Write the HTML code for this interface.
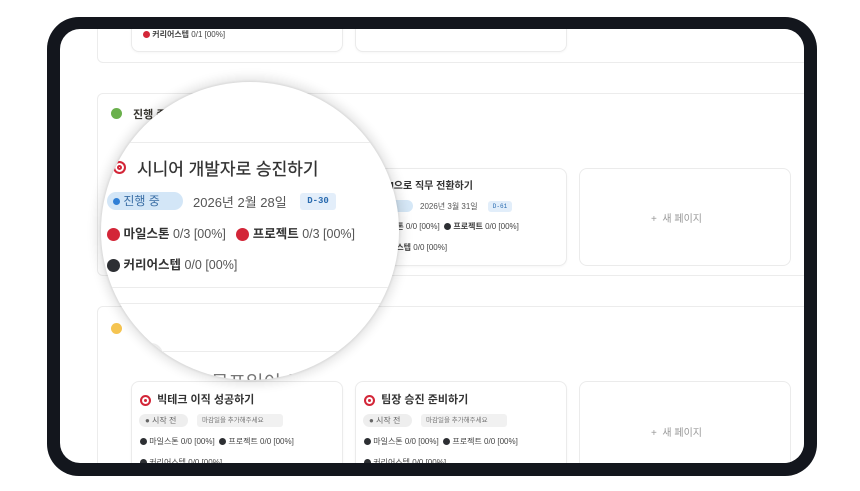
<!DOCTYPE html>
<html><head><meta charset="utf-8"><style>
*{margin:0;padding:0;box-sizing:border-box}
body{width:860px;height:491px;background:#fff;position:relative;overflow:hidden;font-family:"Liberation Sans","Noto Sans CJK KR",sans-serif;color:#37352f}
.abs{position:absolute}
.frame{left:47px;top:17px;width:770px;height:459px;background:#13161d;border-radius:32px}
.screen{left:60px;top:29px;width:744px;height:434px;background:#fff;border-radius:20px;overflow:hidden}
.sec{position:absolute;border:1px solid #ececec;border-radius:6px;background:#fff}
.card{position:absolute;border:1px solid #ebebeb;border-radius:8px;background:#fff;box-shadow:0 1px 2px rgba(0,0,0,.04)}
.t{position:absolute;white-space:nowrap}
.dot{display:inline-block;border-radius:50%;vertical-align:middle}
.pill{position:absolute;border-radius:8px;white-space:nowrap}
.mag{left:101px;top:82px;width:298px;height:298px;border-radius:50%;overflow:hidden;background:#fff;box-shadow:0 0 10px 5px rgba(0,0,0,.10),0 0 2px 1px rgba(0,0,0,.08)}
.tg{display:inline-block;border-radius:50%;background:#fff;border:2px solid #d32638;box-shadow:inset 0 0 0 2px #fff,inset 0 0 0 4px #d32638;vertical-align:middle}
</style></head><body>
<div class="abs frame"></div>
<div class="abs screen">
 <div class="sec" style="left:37px;top:-20px;width:760px;height:54px"></div>
 <div class="card" style="left:71px;top:-20px;width:212px;height:43px"></div>
 <div class="card" style="left:295px;top:-20px;width:212px;height:43px"></div>
 <div class="t" style="left:83px;top:0px;font-size:8px;color:#444"><span class="dot" style="width:7px;height:7px;background:#d32638"></span> <b>커리어스텝</b> 0/1 [00%]</div>

 <div class="sec" style="left:37px;top:64px;width:760px;height:183px"></div>
 <div class="dot abs" style="left:51px;top:79px;width:11px;height:11px;background:#6ab04c"></div>
 <div class="t" style="left:73px;top:77px;font-size:11px;font-weight:bold">진행 중</div>
 <div class="card" style="left:71px;top:139px;width:212px;height:98px"></div>
 <div class="card" style="left:295px;top:139px;width:212px;height:98px"></div>
 <div class="t" style="left:306px;top:148px;font-size:10px;font-weight:bold;color:#333"><span class="tg" style="width:10px;height:10px"></span> PM으로 직무 전환하기</div>
 <div class="pill" style="left:305px;top:171px;width:48px;height:12px;background:#d6e8f7"></div>
 <div class="t" style="left:360px;top:172px;font-size:8px;color:#555">2026년 3월 31일</div>
 <div class="pill" style="left:428px;top:172px;width:24px;height:11px;background:#e2eefa;border-radius:3px;font-size:6px;color:#2b6cb0;text-align:center;line-height:11px;font-family:'Liberation Mono',monospace">D-61</div>
 <div class="t" style="left:305px;top:192px;font-size:8px;color:#444"><span class="dot" style="width:7px;height:7px;background:#2d2f33"></span> <b>마일스톤</b> 0/0 [00%] &nbsp;<span class="dot" style="width:7px;height:7px;background:#2d2f33"></span> <b>프로젝트</b> 0/0 [00%]</div>
 <div class="t" style="left:305px;top:213px;font-size:8px;color:#444"><span class="dot" style="width:7px;height:7px;background:#2d2f33"></span> <b>커리어스텝</b> 0/0 [00%]</div>
 <div class="card" style="left:519px;top:139px;width:212px;height:98px;box-shadow:none"></div>
 <div class="t" style="left:591px;top:181px;font-size:10px;color:#999">+&nbsp; 새 페이지</div>

 <div class="sec" style="left:37px;top:277px;width:760px;height:200px"></div>
 <div class="dot abs" style="left:51px;top:294px;width:11px;height:11px;background:#f5c451"></div>
 <div class="card" style="left:71px;top:352px;width:212px;height:100px"></div>
 <div class="card" style="left:295px;top:352px;width:212px;height:100px"></div>
 <div class="card" style="left:519px;top:352px;width:212px;height:100px;box-shadow:none"></div>
 <div class="t" style="left:591px;top:395px;font-size:10px;color:#999">+&nbsp; 새 페이지</div>

 <div class="t" style="left:80px;top:362px;font-size:11px;font-weight:bold;color:#333"><span class="tg" style="width:11px;height:11px"></span>&nbsp; 빅테크 이직 성공하기</div>
 <div class="pill" style="left:79px;top:385px;width:49px;height:13px;background:#eee;font-size:8px;color:#666;line-height:13px;padding-left:6px">● 시작 전</div>
 <div class="pill" style="left:137px;top:385px;width:86px;height:13px;background:#f1f1f1;border-radius:3px;font-size:6.5px;color:#777;line-height:13px;padding-left:5px">마감일을 추가해주세요</div>
 <div class="t" style="left:80px;top:407px;font-size:8px;color:#444"><span class="dot" style="width:7px;height:7px;background:#2d2f33"></span> 마일스톤 0/0 [00%] &nbsp;<span class="dot" style="width:7px;height:7px;background:#2d2f33"></span> 프로젝트 0/0 [00%]</div>
 <div class="t" style="left:80px;top:428px;font-size:8px;color:#444"><span class="dot" style="width:7px;height:7px;background:#2d2f33"></span> 커리어스텝 0/0 [00%]</div>

 <div class="t" style="left:304px;top:362px;font-size:11px;font-weight:bold;color:#333"><span class="tg" style="width:11px;height:11px"></span>&nbsp; 팀장 승진 준비하기</div>
 <div class="pill" style="left:303px;top:385px;width:49px;height:13px;background:#eee;font-size:8px;color:#666;line-height:13px;padding-left:6px">● 시작 전</div>
 <div class="pill" style="left:361px;top:385px;width:86px;height:13px;background:#f1f1f1;border-radius:3px;font-size:6.5px;color:#777;line-height:13px;padding-left:5px">마감일을 추가해주세요</div>
 <div class="t" style="left:304px;top:407px;font-size:8px;color:#444"><span class="dot" style="width:7px;height:7px;background:#2d2f33"></span> 마일스톤 0/0 [00%] &nbsp;<span class="dot" style="width:7px;height:7px;background:#2d2f33"></span> 프로젝트 0/0 [00%]</div>
 <div class="t" style="left:304px;top:428px;font-size:8px;color:#444"><span class="dot" style="width:7px;height:7px;background:#2d2f33"></span> 커리어스텝 0/0 [00%]</div>
</div>

<div class="abs mag">
 <div class="abs" style="left:0;top:60px;width:298px;height:1px;background:#ececec"></div>
 <div class="t" style="left:12px;top:77px"><span class="tg" style="width:13px;height:13px"></span></div>
 <div class="t" style="left:36px;top:73px;font-size:17px;color:#333;-webkit-text-stroke:0.3px #333">시니어 개발자로 승진하기</div>
 <div class="pill" style="left:6px;top:110px;width:76px;height:18px;background:#d3e6f7;border-radius:9px;font-size:12px;color:#3a6ea5;line-height:18px;padding-left:6px"><span class="dot" style="width:7px;height:7px;background:#2f7fd6"></span> 진행 중</div>
 <div class="t" style="left:92px;top:110px;font-size:13px;color:#555">2026년 2월 28일</div>
 <div class="pill" style="left:199px;top:111px;width:36px;height:17px;background:#e3eefa;border-radius:3px;font-size:9px;color:#2b6cb0;line-height:17px;text-align:center;font-family:'Liberation Mono',monospace;font-weight:bold">D-30</div>
 <div class="t" style="left:6px;top:141px;font-size:12.5px;color:#555"><span class="dot" style="width:13px;height:13px;background:#d32638"></span> <b style="color:#333">마일스톤</b> 0/3 [00%] &nbsp;&nbsp;<span class="dot" style="width:13px;height:13px;background:#d32638"></span> <b style="color:#333">프로젝트</b> 0/3 [00%]</div>
 <div class="t" style="left:6px;top:172px;font-size:12.5px;color:#555"><span class="dot" style="width:13px;height:13px;background:#2d2f33"></span> <b style="color:#333">커리어스텝</b> 0/0 [00%]</div>
 <div class="abs" style="left:0;top:205px;width:298px;height:1px;background:#ececec"></div>
 <div class="abs" style="left:0;top:221px;width:298px;height:1px;background:#ececec"></div>
 <div class="abs" style="left:28px;top:261px;width:34px;height:24px;background:#ebebeb;border-radius:12px;font-size:11px;text-align:center;line-height:24px;color:#333">☀</div>
 <div class="abs" style="left:62px;top:269px;width:236px;height:1px;background:#ececec"></div>
 <div class="t" style="left:110px;top:286px;font-size:19px;color:#777">목표일이 없는</div>
</div>
</body></html>
